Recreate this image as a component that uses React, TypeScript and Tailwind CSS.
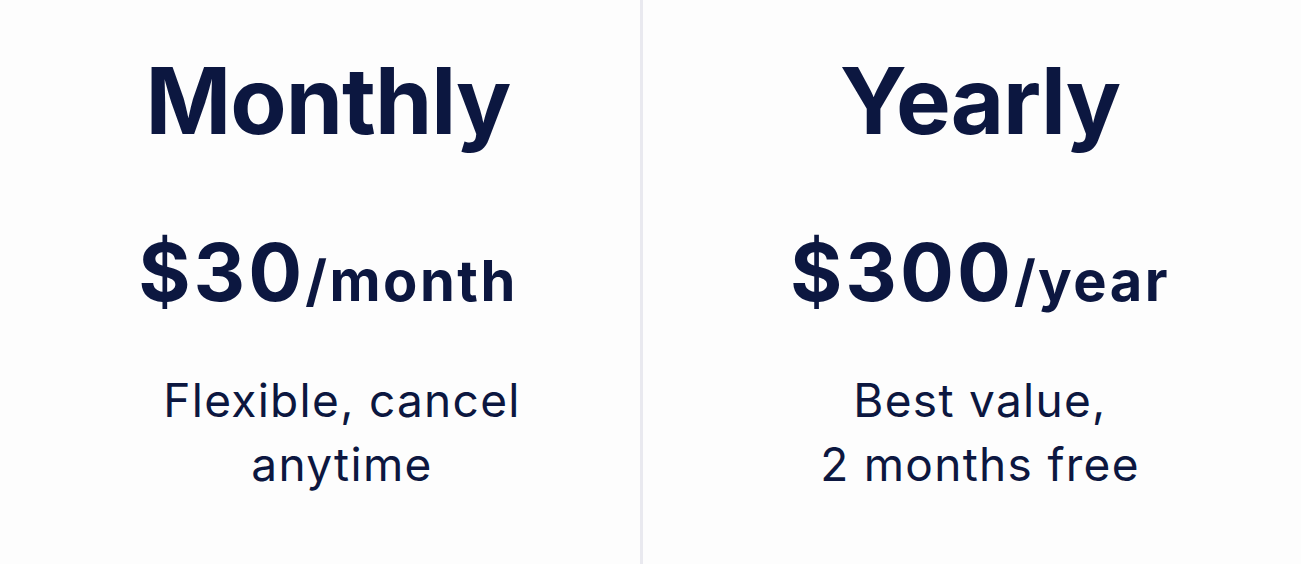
const plans = [
  {
    name: 'Monthly',
    price: '$30',
    period: '/month',
    note: ['Flexible, cancel', 'anytime'],
  },
  {
    name: 'Yearly',
    price: '$300',
    period: '/year',
    note: ['Best value,', '2 months free'],
  },
];

export default function App() {
  return (
    <div
      className="flex h-[564px] w-full bg-[#fdfdfd] text-[#0c1740]"
      style={{ fontFamily: 'Inter, "Noto Sans", sans-serif' }}
    >
      {plans.map((plan, i) => (
        <div
          key={plan.name}
          className={
            i === 0
              ? 'flex w-[640px] flex-col items-center pl-4 pt-[46px]'
              : 'flex flex-1 flex-col items-center border-l-[3px] border-[#e9e9ef] pl-4 pt-[46px]'
          }
        >
          <h2 className="text-[92px] font-bold leading-[110px] tracking-[-1px]">{plan.name}</h2>
          <div className="mt-[76px] flex items-baseline leading-none">
            <span className="text-[80px] font-bold tracking-[3px]">{plan.price}</span>
            <span className="text-[56px] font-bold tracking-[2.5px]">{plan.period}</span>
          </div>
          <p
            className={
              i === 0
                ? 'mt-[56px] pl-7 text-center text-[46px] font-normal leading-[64px] tracking-[1.3px]'
                : 'mt-[56px] text-center text-[46px] font-normal leading-[64px] tracking-[1.3px]'
            }
          >
            {plan.note[0]}
            <br />
            {plan.note[1]}
          </p>
        </div>
      ))}
    </div>
  );
}
